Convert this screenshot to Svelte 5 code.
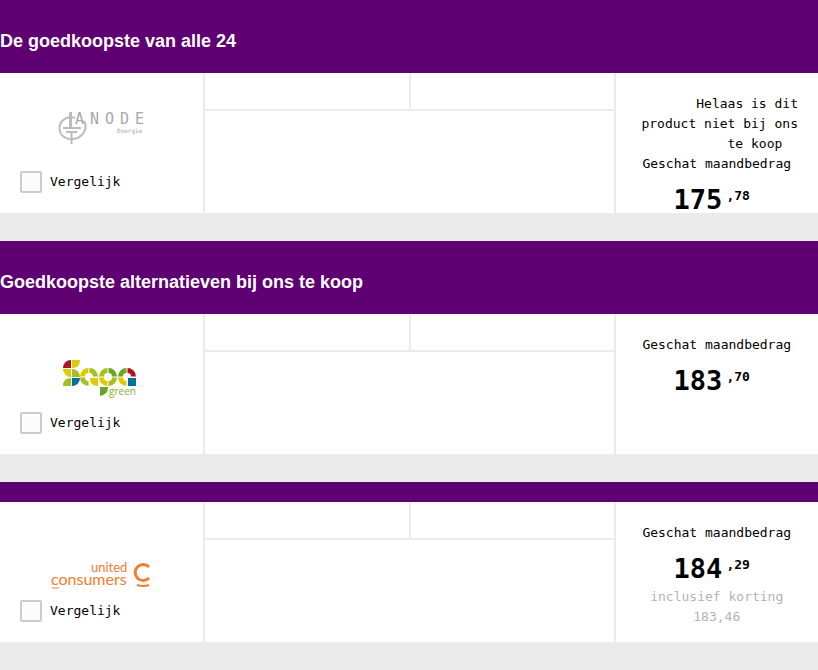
<script>
  const groups = [
    {
      title: 'De goedkoopste van alle 24',
      offers: [{ id: 'anode', unavailable: true, euros: '175', cents: '78' }]
    },
    {
      title: 'Goedkoopste alternatieven bij ons te koop',
      offers: [{ id: 'sapa', euros: '183', cents: '70' }]
    },
    {
      title: '',
      offers: [{ id: 'united', euros: '184', cents: '29', discounted: '183,46' }]
    }
  ];
</script>

{#snippet anodeLogo()}
  <svg class="logo" viewBox="0 0 108 60" role="img" aria-label="Anode Energie">
    <g fill="none" stroke="#bcbcbc" stroke-width="2">
      <path d="M28 10C20 7 12 13 12.500 21c.5 7 7 11 14 10 7-1 12-6 12-13q0-3-2-5" />
      <path d="M23 4v15M16 20h18M19 24h11M24.500 24v12" />
      <path d="M24.500 4v15" stroke-width="1" />
    </g>
    <text class="anode" x="28 43 58 73 88" y="16">ANODE</text>
    <text class="anode-sub" x="70" y="25">Energie</text>
  </svg>
{/snippet}

{#snippet sapaLogo()}
  <svg class="logo" viewBox="0 0 108 60" role="img" aria-label="Sapa green">
    <path fill="#b01224" d="M16 19a8 8 0 0 1 8-8v8z" />
    <path fill="#dfcb00" d="M25 11h8q0 8-8 8z" />
    <path fill="#dfcb00" d="M16 20h8v8a8 8 0 0 1-8-8z" />
    <path fill="#a6c021" d="M25 20a8 8 0 0 1 8 8h-8z" />
    <path fill="#a6c021" d="M16 37q0-8 8-8v8z" />
    <path fill="#00719c" d="M25 29h8a8 8 0 0 1-8 8z" />
    <g fill="none" stroke-width="5">
      <path stroke="#dfcb00" d="M35.500 27.500a6 6 0 0 1 6-6" />
      <path stroke="#a6c021" d="M42.500 21.500a6 6 0 0 1 6 6" />
      <path stroke="#a6c021" d="M35.500 28.500a6 6 0 0 0 6 6" />
      <path stroke="#a6c021" d="M54.500 27.500a6 6 0 0 1 6-6" />
      <path stroke="#6ba525" d="M61.500 21.500a6 6 0 0 1 6 6" />
      <path stroke="#dfcb00" d="M54.500 28.500a6 6 0 0 0 6 6" />
      <path stroke="#a6c021" d="M61.500 34.500a6 6 0 0 0 6-6" />
      <path stroke="#6ba525" d="M73.500 27.500a6 6 0 0 1 6-6" />
      <path stroke="#b01224" d="M80.500 21.500a6 6 0 0 1 6 6" />
      <path stroke="#dfcb00" d="M73.500 28.500a6 6 0 0 0 6 6" />
    </g>
    <path fill="#dfcb00" d="M43 29h8v8q-8 0-8-8z" />
    <path fill="#00719c" d="M81 29h8v8h-8z" />
    <path fill="#6ba525" d="M53 38h8q0 8-8 9z" />
    <text class="green" x="62" y="46">green</text>
  </svg>
{/snippet}

{#snippet unitedLogo()}
  <svg class="logo" viewBox="0 0 108 60" role="img" aria-label="United Consumers">
    <text class="united" x="44" y="35">united</text>
    <text class="consumers" x="4" y="48">consumers</text>
    <path d="M5 51h7" fill="none" stroke="#f47b30" stroke-width="1" />
    <path d="M102 30a8 8 0 1 0 0 11" fill="none" stroke="#f47b30" stroke-width="3" />
    <path d="M90 48q6 2 12 0" fill="none" stroke="#f47b30" stroke-width="2" />
  </svg>
{/snippet}

<main>
  {#each groups as group}
    <section>
      <header class:empty={!group.title}>
        {#if group.title}<h2>{group.title}</h2>{/if}
      </header>
      {#each group.offers as offer}
        <article>
          <div class="supplier">
            {#if offer.id === 'anode'}{@render anodeLogo()}
            {:else if offer.id === 'sapa'}{@render sapaLogo()}
            {:else}{@render unitedLogo()}{/if}
            <label for={offer.id}><input type="checkbox" id={offer.id} />Vergelijk</label>
          </div>
          <div class="details">
            <div class="specs"><div></div><div></div></div>
          </div>
          <div class="cost">
            {#if offer.unavailable}
              <p class="notice">Helaas is dit product niet bij ons te koop&nbsp;&nbsp;</p>
            {/if}
            <p>Geschat maandbedrag</p>
            <p class="price"><strong>{offer.euros}</strong><sup>,{offer.cents}</sup></p>
            {#if offer.discounted}
              <p class="discount">inclusief korting {offer.discounted}</p>
            {/if}
          </div>
        </article>
      {/each}
    </section>
  {/each}
</main>

<style>
  :global(body) { margin: 0; background: #ebebeb; }
  main { font: 13px/20px "DejaVu Sans Mono", "Liberation Mono", monospace; color: #000; }
  section { padding-bottom: 28px; }
  header { background: #5f0072; padding: 29px 0 20px; }
  header.empty { padding: 20px 0 0; }
  h2 { margin: 0; color: #fff; font: bold 18px/24px "Liberation Sans", Arial, sans-serif; }
  article { display: grid; grid-template-columns: 1fr 2fr 1fr; min-height: 140px; background: #fff; }
  .supplier { box-sizing: border-box; border-right: 2px solid #ebebeb; padding: 35px 20px 20px; }
  .logo { display: block; width: 108px; height: 60px; margin: 0 auto 3px; }
  label { display: flex; align-items: center; gap: 8px; height: 22px; }
  input { appearance: none; box-sizing: border-box; width: 22px; height: 22px; margin: 0; border: 2px solid #ccc; border-radius: 2px; background: #fcfcfb; }
  input:checked { background: #5f0072; }
  .specs { display: grid; grid-template-columns: 1fr 1fr; height: 36px; border-bottom: 2px solid #ebebeb; }
  .specs div:last-child { border-left: 2px solid #ebebeb; }
  .cost { padding: 21px 20px 0; border-left: 2px solid #ebebeb; text-align: center; }
  p { margin: 0; }
  .notice { text-align: right; }
  .price { display: flex; justify-content: center; gap: 4px; height: 39px; padding-right: 10px; }
  .price strong { font-size: 27px; line-height: 52px; }
  .price sup { font-weight: bold; font-size: 13px; line-height: 44px; }
  .discount { margin-top: 5px; color: #b3b3b3; }
  .anode { font: 15px "DejaVu Sans Mono", monospace; fill: #a8a8a8; }
  .anode-sub { font: 6px "DejaVu Sans Mono", monospace; fill: #a8a8a8; }
  .green { font: 10px "Open Sans", sans-serif; fill: #7fae2a; }
  .united { font: 13px Lato, sans-serif; fill: #f47b30; }
  .consumers { font: 16px Lato, sans-serif; fill: #f47b30; }
</style>
